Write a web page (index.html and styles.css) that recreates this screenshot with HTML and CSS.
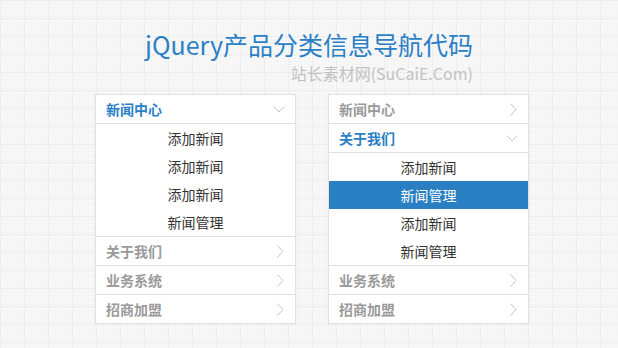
FILE: index.html
```html
<!DOCTYPE html>
<html lang="zh-CN">
<head>
    <meta charset="UTF-8">
    <meta name="viewport" content="width=device-width, initial-scale=1.0">
    <title>jQuery产品分类信息导航代码</title>
    <link rel="stylesheet" href="styles.css">
</head>
<body>

    <header class="page-head">
        <div class="head-inner">
            <h1>jQuery产品分类信息导航代码</h1>
            <p class="sub">站长素材网(SuCaiE.Com)</p>
        </div>
    </header>

    <section class="menus">
        <!-- first menu: 新闻中心 open -->
        <ul class="menu">
            <li class="menu-item open">
                <div class="menu-title">新闻中心
                    <svg class="arrow-down" width="12" height="7" viewBox="0 0 12 7"><polyline points="0.5,0.5 6,6 11.5,0.5" /></svg>
                </div>
                <ul class="sub-menu">
                    <li>添加新闻</li>
                    <li>添加新闻</li>
                    <li>添加新闻</li>
                    <li>新闻管理</li>
                </ul>
            </li>
            <li class="menu-item">
                <div class="menu-title">关于我们
                    <svg class="arrow-right" width="7" height="13" viewBox="0 0 7 13"><polyline points="0.5,0.5 6,6.5 0.5,12.5" /></svg>
                </div>
            </li>
            <li class="menu-item">
                <div class="menu-title">业务系统
                    <svg class="arrow-right" width="7" height="13" viewBox="0 0 7 13"><polyline points="0.5,0.5 6,6.5 0.5,12.5" /></svg>
                </div>
            </li>
            <li class="menu-item">
                <div class="menu-title">招商加盟
                    <svg class="arrow-right" width="7" height="13" viewBox="0 0 7 13"><polyline points="0.5,0.5 6,6.5 0.5,12.5" /></svg>
                </div>
            </li>
        </ul>

        <!-- second menu: 关于我们 open -->
        <ul class="menu">
            <li class="menu-item">
                <div class="menu-title">新闻中心
                    <svg class="arrow-right" width="7" height="13" viewBox="0 0 7 13"><polyline points="0.5,0.5 6,6.5 0.5,12.5" /></svg>
                </div>
            </li>
            <li class="menu-item open">
                <div class="menu-title">关于我们
                    <svg class="arrow-down" width="12" height="7" viewBox="0 0 12 7"><polyline points="0.5,0.5 6,6 11.5,0.5" /></svg>
                </div>
                <ul class="sub-menu">
                    <li>添加新闻</li>
                    <li class="active">新闻管理</li>
                    <li>添加新闻</li>
                    <li>新闻管理</li>
                </ul>
            </li>
            <li class="menu-item">
                <div class="menu-title">业务系统
                    <svg class="arrow-right" width="7" height="13" viewBox="0 0 7 13"><polyline points="0.5,0.5 6,6.5 0.5,12.5" /></svg>
                </div>
            </li>
            <li class="menu-item">
                <div class="menu-title">招商加盟
                    <svg class="arrow-right" width="7" height="13" viewBox="0 0 7 13"><polyline points="0.5,0.5 6,6.5 0.5,12.5" /></svg>
                </div>
            </li>
        </ul>
    </section>

</body>
</html>
```

FILE: styles.css
```css
/* Page and grid background */
body {
    margin: 0;
    padding: 0;
    font-family: "Noto Sans CJK SC", "Noto Sans", sans-serif;
    background-color: #f7f7f7;
    background-image:
        linear-gradient(to right, #eeeeee 1px, transparent 1px),
        linear-gradient(to bottom, #eeeeee 1px, transparent 1px),
        radial-gradient(circle, #eeeeee 0.8px, transparent 1px);
    background-size: 24px 18px, 24px 18px, 3px 3px;
}

/* Heading */
.page-head {
    display: flex;
    justify-content: center;
    padding-top: 29px;
}

.page-head h1 {
    margin: 0;
    font-size: 25px;
    line-height: 30px;
    font-weight: normal;
    color: #2b7fc6;
}

.page-head .sub {
    margin: 4px 0 0;
    text-align: right;
    font-size: 16px;
    line-height: 20px;
    color: #c2c2c2;
}

/* Menus */
.menus {
    display: flex;
    align-items: flex-start;
    gap: 32px;
    padding-left: 95px;
    margin-top: 11px;
}

.menu {
    list-style: none;
    margin: 0;
    padding: 0;
    width: 199px;
    background-color: #ffffff;
    border: 1px solid #e4e1d8;
    box-shadow: 0 1px 2px rgba(0, 0, 0, 0.06);
}

.menu-item {
    border-bottom: 1px solid #e4e1d8;
}

.menu-item:last-child {
    border-bottom: none;
}

.menu-title {
    display: flex;
    justify-content: space-between;
    align-items: center;
    height: 28px;
    padding: 0 10px;
    font-size: 14px;
    font-weight: bold;
    color: #9a9a9a;
}

.menu-title svg polyline {
    fill: none;
    stroke: #c4c4c4;
    stroke-width: 1;
}

.arrow-right {
    margin-right: 1px;
}

.open .menu-title {
    color: #2b7fc6;
    border-bottom: 1px solid #e4e1d8;
}

.sub-menu {
    list-style: none;
    margin: 0;
    padding: 0;
}

.sub-menu li {
    height: 28px;
    line-height: 28px;
    text-align: center;
    font-size: 14px;
    color: #333333;
}

.sub-menu li.active {
    background-color: #2a7fc2;
    color: #ffffff;
}
```
